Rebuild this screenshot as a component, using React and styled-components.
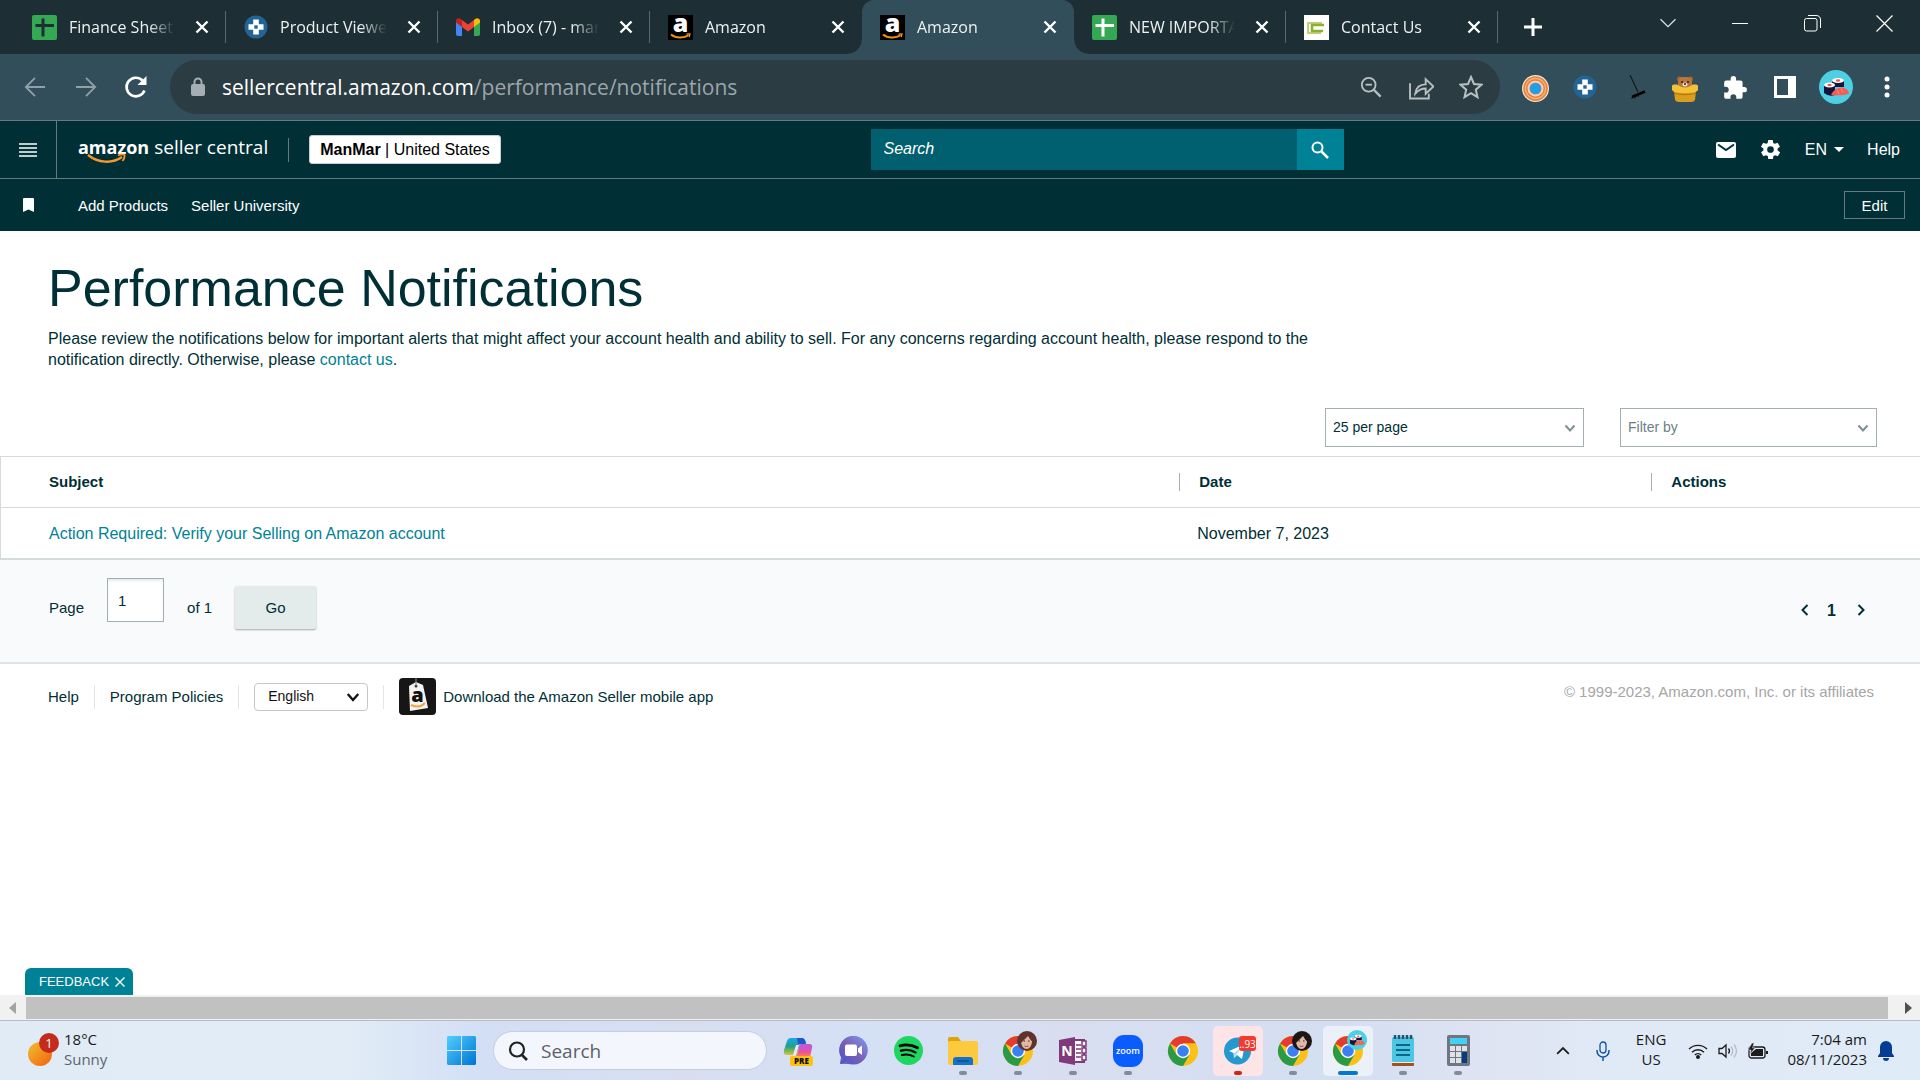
import React from 'react';
import styled, { createGlobalStyle, css } from 'styled-components';

const ui = '"Open Sans", "Noto Sans", sans-serif';
const page = '"Liberation Sans", Arial, sans-serif';

const GlobalStyle = createGlobalStyle`
  * { box-sizing: border-box; }
  body { margin: 0; background: #fff; font-family: ${page}; }
  button, input, select { font: inherit; color: inherit; margin: 0; }
  button { background: none; border: 0; padding: 0; cursor: pointer; }
  a { text-decoration: none; color: inherit; }
  svg { display: block; flex: none; }
`;

const Window = styled.div`
  min-height: 100vh;
  display: flex;
  flex-direction: column;
`;

/* ---------- browser chrome ---------- */

const TabStrip = styled.div`
  display: flex;
  height: 54px;
  padding-left: 14px;
  background: #1d2f35;
  color: #fff;
  font: 16px/24px ${ui};
`;

const Tab = styled.div`
  position: relative;
  flex: 0 1 212px;
  min-width: 0;
  display: flex;
  align-items: center;
  padding: 0 17px 0 18px;
  color: #eef1f2;
  ${p => p.$active && css`
    background: #324e5a;
    border-radius: 12px 12px 0 0;
    &::before, &::after {
      content: "";
      position: absolute;
      bottom: 0;
      width: 14px;
      height: 14px;
    }
    &::before {
      left: -14px;
      background: radial-gradient(circle at 0 0, transparent 13px, #324e5a 14px);
    }
    &::after {
      right: -14px;
      background: radial-gradient(circle at 100% 0, transparent 13px, #324e5a 14px);
    }
  `}
  ${p => p.$divider && css`
    &::after {
      content: "";
      position: absolute;
      right: 0;
      top: 11px;
      width: 1px;
      height: 32px;
      background: #58696f;
    }
  `}
`;

const TabTitle = styled.span`
  flex: 1;
  margin: 0 20px 0 12px;
  overflow: hidden;
  white-space: nowrap;
  mask-image: linear-gradient(90deg, #000 75%, transparent 100%);
`;

const IconButton = styled.button`
  display: grid;
  place-items: center;
  width: ${p => p.$w || 24}px;
  height: ${p => p.$h || 24}px;
`;

const NewTab = styled(IconButton)`
  align-self: center;
  margin-left: 10px;
`;

const WindowControls = styled.div`
  display: flex;
  margin-left: auto;
`;

const Toolbar = styled.div`
  display: flex;
  align-items: center;
  height: 66px;
  padding-left: 9px;
  background: #324e5a;
  color: #fff;
`;

const NavButtons = styled.div`
  display: flex;
  width: 161px;
`;

const Omnibox = styled.div`
  flex: 1;
  display: flex;
  align-items: center;
  height: 54px;
  padding: 0 4px 0 20px;
  border-radius: 27px;
  background: #2b3c43;
  margin-right: 10px;
`;

const Url = styled.div`
  flex: 1;
  margin-left: 16px;
  font: 21px/30px ${ui};
  color: #9ba6ab;
  white-space: nowrap;
  b { font-weight: 400; color: #fff; }
`;

const OmniActions = styled.div`
  display: flex;
  color: #b9c0c3;
`;

const Extensions = styled.div`
  display: flex;
  align-items: center;
  padding-right: 8px;
`;

/* ---------- seller central header ---------- */

const Header = styled.header`
  display: grid;
  grid-template-columns: 151fr 473px 100fr;
  height: 59px;
  background: #002f36;
  border-top: 1px solid #667a80;
  border-bottom: 1px solid #667a80;
  color: #fff;
  font-size: 16px;
`;

const Brand = styled.div`
  display: flex;
  align-items: center;
`;

const MenuButton = styled.button`
  display: grid;
  place-items: center;
  width: 57px;
  height: 57px;
  border-right: 1px solid #667a80;
`;

const Logo = styled.a`
  position: relative;
  display: flex;
  align-items: baseline;
  gap: 5px;
  margin: 0 20px 6px 21px;
  font: 19px/24px ${ui};
  b { font-size: 18px; }
  svg { position: absolute; left: 9px; top: 18px; }
`;

const Account = styled.button`
  height: 29px;
  margin-left: 20px;
  padding: 0 10px;
  border: 1px solid #c8cccc;
  border-radius: 3px;
  background: #fff;
  color: #000;
  white-space: nowrap;
`;

const Rule = styled.span`
  width: 1px;
  height: 24px;
  background: ${p => p.$color};
`;

const SearchForm = styled.form`
  align-self: center;
  display: flex;
  height: 41px;
  input {
    flex: 1;
    min-width: 0;
    padding: 0 13px 2px;
    border: 0;
    border-radius: 0;
    background: #00606f;
    outline: 0;
    font-style: italic;
    &::placeholder { color: #fff; opacity: 1; }
  }
  button {
    display: grid;
    place-items: center;
    width: 47px;
    background: #008296;
  }
`;

const HeaderLinks = styled.div`
  display: flex;
  align-items: center;
  justify-content: flex-end;
  padding-right: 20px;
`;

const Language = styled.button`
  display: flex;
  align-items: center;
  gap: 7px;
  margin: 0 23px 0 12px;
`;

const Favorites = styled.nav`
  display: flex;
  align-items: center;
  gap: 23px;
  height: 52px;
  padding: 0 15px 0 23px;
  background: #002f36;
  color: #fff;
  font-size: 15px;
  svg { margin-right: 21px; }
`;

const EditButton = styled.button`
  width: 61px;
  height: 28px;
  margin-left: auto;
  border: 1px solid #667a80;
`;

/* ---------- page ---------- */

const Main = styled.main`
  flex: 1;
  display: flex;
  flex-direction: column;
  color: #002f36;
  font-size: 16px;
  line-height: 21px;
`;

const Intro = styled.section`
  padding: 27px 48px 0;
  h1 {
    margin: 0;
    font-size: 52px;
    line-height: 60px;
    font-weight: 400;
  }
  p {
    max-width: 1270px;
    margin: 10px 0 0;
  }
`;

const TextLink = styled.a`
  color: #008296;
`;

const Filters = styled.div`
  display: flex;
  justify-content: flex-end;
  gap: 36px;
  padding: 38px 43px 9px;
`;

const SelectBox = styled.span`
  display: grid;
  width: ${p => p.$w}px;
  align-items: center;
  & > * { grid-area: 1 / 1; }
  svg { justify-self: end; margin-right: 8px; pointer-events: none; }
`;

const FilterSelect = styled.select`
  appearance: none;
  width: 100%;
  height: 39px;
  padding: 0 7px;
  border: 1px solid #a2b0b3;
  border-radius: 0;
  background: #fff;
  color: ${p => p.$muted ? '#6c7f84' : '#002f36'};
  font-size: 14px;
`;

const Table = styled.table`
  width: 100%;
  table-layout: fixed;
  border-collapse: separate;
  border-spacing: 0;
  border: 1px solid #d5dbdb;
  border-right: 0;
  th, td {
    height: 50px;
    padding: 0 0 0 18px;
    text-align: left;
  }
  th {
    height: 51px;
    padding: 0;
    border-bottom: 1px solid #d5dbdb;
    font-size: 15px;
  }
  th:first-child, td:first-child { padding-left: 48px; }
  th:first-child div { border: 0; padding: 0; }
`;

const HeadCell = styled.div`
  padding-left: 19px;
  border-left: 1px solid #a2b0b3;
  line-height: 18px;
`;

const Pager = styled.section`
  display: flex;
  justify-content: space-between;
  align-items: flex-start;
  height: 105px;
  padding: 18px 49px 0;
  border-top: 1px solid #d5dbdb;
  border-bottom: 2px solid #dfe3e5;
  background: #f9fafc;
`;

const PageForm = styled.form`
  display: flex;
  align-items: flex-end;
  gap: 23px;
  font-size: 15px;
  line-height: 43px;
  input {
    width: 57px;
    height: 44px;
    margin-bottom: 7px;
    padding: 0 10px;
    border: 1px solid #a2b0b3;
    border-radius: 0;
    background: #fff;
    box-shadow: inset 0 2px 2px #e8ebec;
  }
  button {
    width: 81px;
    height: 43px;
    border-radius: 2px;
    background: #e3ebeb;
    box-shadow: 0 1px 2px #00000055;
  }
`;

const PageNav = styled.nav`
  display: flex;
  align-items: center;
  gap: 18px;
  margin: 20px 3px 0 0;
`;

const Footer = styled.footer`
  display: flex;
  align-items: center;
  padding: 14px 46px 0 48px;
  font-size: 15px;
`;

const FooterLinks = styled.div`
  display: flex;
  align-items: center;
  gap: 15px;
`;

const FooterSelect = styled.select`
  appearance: none;
  width: 100%;
  height: 28px;
  padding: 0 13px;
  border: 1px solid #c4c8c8;
  border-radius: 4px;
  background: #fff;
  color: #111;
  font-size: 14px;
`;

const AppLink = styled.a`
  display: flex;
  align-items: center;
  gap: 7px;
`;

const Copyright = styled.span`
  align-self: flex-start;
  margin-left: auto;
  color: #a6a6a6;
  line-height: 28px;
`;

const Feedback = styled.button`
  align-self: flex-start;
  display: flex;
  align-items: center;
  gap: 6px;
  height: 27px;
  margin: auto 0 0 25px;
  padding: 0 8px 0 14px;
  border-radius: 6px 6px 0 0;
  background: #008296;
  color: #fff;
  font-size: 13px;
`;

const ScrollBar = styled.div`
  display: flex;
  align-items: center;
  justify-content: space-between;
  gap: 10px;
  height: 25px;
  padding: 0 8px 0 9px;
  background: #f1f1f1;
`;

const ScrollThumb = styled.div`
  flex: 1;
  height: 22px;
  margin-right: 7px;
  background: #c1c1c1;
`;

/* ---------- taskbar ---------- */

const Taskbar = styled.footer`
  display: grid;
  grid-template-columns: 1fr auto 1fr;
  height: 60px;
  border-top: 1px solid #b4bac6;
  background: linear-gradient(90deg, #e0ebf6 0%, #e1ecf6 18%, #d3dff5 25%, #d8def0 36%, #d4e0f5 45%, #d8def0 55%, #d4dff2 70%, #dfe4f2 78%, #e0eaf6 84%, #dfebf7 100%);
  color: #1b1b1b;
  font: 15px/20px ${ui};
`;

const Weather = styled.div`
  display: flex;
  align-items: center;
  gap: 5px;
  padding-left: 26px;
  small { display: block; font-size: 15px; color: #5d6470; }
`;

const Apps = styled.div`
  display: flex;
  align-items: center;
  padding-left: 4px;
`;

const AppButton = styled.button`
  position: relative;
  display: grid;
  place-items: center;
  width: 50px;
  height: 50px;
  margin: 0 5px 0 0;
  border-radius: 5px;
  background: ${p => p.$bg || 'none'};
  &::after {
    content: "";
    position: absolute;
    bottom: 1px;
    width: ${p => p.$wide ? 20 : 8}px;
    height: 4px;
    border-radius: 2px;
    background: ${p => p.$dot || 'transparent'};
  }
`;

const TaskSearch = styled.label`
  display: flex;
  align-items: center;
  gap: 13px;
  width: 274px;
  height: 39px;
  margin: 0 6px 0 2px;
  padding: 0 14px;
  border: 1px solid #c5cde2;
  border-radius: 20px;
  background: #f3f6fd;
  input {
    min-width: 0;
    flex: 1;
    padding: 0;
    border: 0;
    outline: 0;
    background: none;
    font-size: 19px;
    &::placeholder { color: #5d6068; opacity: 1; }
  }
`;

const Tray = styled.div`
  display: flex;
  align-items: center;
  justify-content: flex-end;
  padding-right: 26px;
`;

const BarText = styled.div`
  margin: 0 ${p => p.$r || 0}px 0 ${p => p.$l || 0}px;
  padding-bottom: 4px;
  text-align: ${p => p.$align || 'left'};
`;

/* ---------- drawings ---------- */

const Svg = ({ w = 24, h = w, vb = '0 0 24 24', children, ...rest }) => (
  <svg width={w} height={h} viewBox={vb} fill="none" aria-hidden="true" {...rest}>{children}</svg>
);
const line = { stroke: 'currentColor', strokeWidth: 2 };

const Close = () => <Svg w={14} vb="0 0 14 14"><path d="M1.5 1.5l11 11M12.5 1.5l-11 11" stroke="#fff" strokeWidth="2.4" /></Svg>;
const Sheet = ({ cross = '#fff' }) => (
  <Svg w={25} vb="0 0 25 25"><rect width="25" height="25" rx="2" fill="#34a853" /><path d="M11 3.500V21.500M3.500 10.500H22" stroke={cross} strokeWidth="3" /></Svg>
);
const Plus = () => (
  <Svg w={24}><circle cx="12" cy="12" r="11.500" fill="#226595" /><path d="M9.200 4.500h5.600v4.700h4.700v5.600h-4.700v4.700H9.200v-4.700H4.500V9.200h4.700z" fill="#fff" /><rect x="10.300" y="10.300" width="3.400" height="3.400" fill="#226595" /></Svg>
);
const Gmail = () => (
  <Svg w={24}><path d="M0 6v13a2 2 0 002 2h4V10z" fill="#4285f4" /><path d="M24 6v13a2 2 0 01-2 2h-4V10z" fill="#34a853" /><path d="M18 5v7l6-4.500V6c0-2.800-3-3.500-4.500-2.200z" fill="#fbbc04" /><path d="M6 5v7L0 7.500V6c0-2.800 3-3.500 4.500-2.200z" fill="#c5221f" /><path d="M6 12V5l6 4.500L18 5v7l-6 4.500z" fill="#ea4335" /></Svg>
);
const AmazonA = () => (
  <Svg w={25} vb="0 0 25 25"><rect width="25" height="25" fill="#000" /><text x="12.500" y="17" textAnchor="middle" fontFamily="Open Sans, sans-serif" fontWeight="800" fontSize="25" fill="#fff">a</text><path d="M3 19.500c5 4 13 4 17.500.8" stroke="#f29111" strokeWidth="2" /><path d="M18.500 19.200l3.500-.2-.8 3" stroke="#f29111" strokeWidth="1.300" /></Svg>
);
const Contact = () => (
  <Svg w={25} vb="0 0 25 25"><rect width="25" height="25" fill="#fff" /><path d="M18 8H4v10h13" stroke="#bcd07c" strokeWidth="2" /><path d="M20 10H8v6h11" stroke="#8bb02c" strokeWidth="2.500" /></Svg>
);
const Chevron = ({ w = 12, color = '#7d9094', d = 'M1.500 3.500l4.500 5 4.500-5', sw = 2 }) => (
  <Svg w={w} vb="0 0 12 12"><path d={d} stroke={color} strokeWidth={sw} /></Svg>
);
const Puzzle = () => (
  <Svg w={26}><path fill="#fff" d="M20.500 11H19V7a2 2 0 00-2-2h-4V3.500a2.500 2.500 0 00-5 0V5H4a2 2 0 00-2 2v3.800h1.500a2.700 2.700 0 010 5.400H2V20a2 2 0 002 2h3.800v-1.500a2.700 2.700 0 015.400 0V22H17a2 2 0 002-2v-4h1.500a2.500 2.500 0 000-5z" /></Svg>
);
const Bear = () => (
  <Svg w={28} vb="0 0 28 28"><circle cx="8.500" cy="4" r="2.500" fill="#a5652d" /><circle cx="19.500" cy="4" r="2.500" fill="#a5652d" /><rect x="7" y="2" width="14" height="13" rx="5" fill="#b9763a" /><circle cx="11" cy="7" r="1" fill="#222" /><circle cx="17" cy="7" r="1" fill="#222" /><ellipse cx="14" cy="9.500" rx="2.500" ry="2" fill="#f5e4cf" /><circle cx="14" cy="9" r="1" fill="#222" /><path d="M3 16h22l-1 9q-1 2-4 2H8q-3 0-4-2z" fill="#dc9c1c" /><path d="M1 11q0-1.500 2-1.500h3q8 6 16 0h3q2 0 2 1.500v4q-1 3-13 3T1 15z" fill="#f4c236" /><path d="M3 18.500q11 2.500 22 0" stroke="#a87410" /></Svg>
);
const Target = () => (
  <Svg w={27}><circle cx="12" cy="12" r="12" fill="#f4e5d8" /><circle cx="12" cy="12" r="9" stroke="#e8853d" strokeWidth="4" /><circle cx="12" cy="12" r="9" stroke="#f0b48a" strokeWidth="1" /><circle cx="12" cy="12" r="6.500" fill="#f8c9a0" /><circle cx="12" cy="12" r="5.200" fill="#3a92e0" /><circle cx="12" cy="12" r="3" fill="#11a6ea" /></Svg>
);
const Rake = () => (
  <Svg w={24}><path d="M7 0l8 17" stroke="#15191b" strokeWidth="1.200" /><path d="M9 22l13-5.500" stroke="#000" strokeWidth="2.500" /><path d="M9 22.500v1.500M12 22v1.500M15 20.500V22" stroke="#111" /></Svg>
);
const SushiArt = () => (
  <g>
    <circle cx="17" cy="17" r="17" fill="#4dd0e1" />
    <path d="M13 10v7h12v-7z" fill="#14143c" /><ellipse cx="19" cy="10.500" rx="6" ry="2.500" fill="#fff" /><ellipse cx="19" cy="10.500" rx="2.200" ry="1.200" fill="#f4584e" />
    <path d="M5 15v8q5 4 11 2V15z" fill="#14143c" /><ellipse cx="10.500" cy="15" rx="5.500" ry="2.500" fill="#fff" /><ellipse cx="10.500" cy="15" rx="2.200" ry="1.200" fill="#f4584e" />
    <path d="M12 24.500q4-7 11-7 6 1 7 6-5 2.500-10 1.500-5 1-8-.5z" fill="#fb5a53" /><path d="M18 20l2 4M22 18.500l2 4" stroke="#ff8d84" />
  </g>
);
const ChromeLogo = ({ avatar }) => (
  <Svg w={38} h={42} vb="0 0 38 42">
    <g transform="translate(4 6)">
      <circle cx="15" cy="15" r="15" fill="#fbc116" />
      <path d="M15 15L2 7.500A15 15 0 0128 7.500H15z" fill="#e33b2e" />
      <path d="M15 15l-6.500 3.700L2 7.500A15 15 0 0015 30l6.500-11.300z" fill="#2a9a46" />
      <path d="M21.500 18.700L28 7.500H15v7.500z" fill="#fbc116" />
      <circle cx="15" cy="15" r="7.200" fill="#fff" /><circle cx="15" cy="15" r="5.800" fill="#3c7ff0" />
    </g>
    {avatar === 'sushi' && <g transform="translate(18 0) scale(.59)"><SushiArt /></g>}
    {avatar && avatar !== 'sushi' && (
      <g>
        <circle cx="28" cy="11" r="10" fill={avatar} />
        <ellipse cx="27.500" cy="11.500" rx="5.500" ry="7.500" fill="#e3b7a4" />
        <path d="M21 14Q21 3 28 3q6 0 6 9-3-2-5-6-3 3-8 8z" fill={avatar} />
        <path d="M25.500 16q2 1 4 0" stroke="#a54450" /><path d="M24.500 11h1.500M29 11h1.500" stroke="#3b2420" />
      </g>
    )}
  </Svg>
);
const Start = () => (
  <Svg w={29} vb="0 0 29 29"><defs><linearGradient id="win" x1="0" y1="0" x2="1" y2="1"><stop stopColor="#4fd0ff" /><stop offset="1" stopColor="#0072d2" /></linearGradient></defs><path fill="url(#win)" d="M1 0h13v14H0V1zM15 0h13l1 1v13H15zM0 15h14v14H1l-1-1zM15 15h14v13l-1 1H15z" /></Svg>
);
const Copilot = () => (
  <Svg w={30} vb="0 0 30 30"><defs><linearGradient id="ca" x1="0" y1="0" x2="0" y2="1"><stop stopColor="#19a7ea" /><stop offset=".5" stopColor="#23a08a" /><stop offset="1" stopColor="#d8c52e" /></linearGradient><linearGradient id="cb" x1="0" y1="0" x2="0" y2="1"><stop stopColor="#b35bea" /><stop offset=".6" stopColor="#ee4f9d" /><stop offset="1" stopColor="#f98355" /></linearGradient></defs>
    <path d="M8 2h11q3 0 4 5h-6l-3 12H4q-4 0-3-5L4 5q1-3 4-3z" fill="url(#ca)" /><path d="M14 2h5q3 0 4 6h-8z" fill="#1f55cf" /><path d="M18 8h8q4 0 3 4l-2 9H11q3-1 4-5l1-5q0-3 2-3z" fill="url(#cb)" /><path d="M16 9l-3 10h-3l3-10z" fill="#e6eafa" />
    <rect x="7" y="20" width="23" height="10" rx="2" fill="#ffc30b" /><text x="18.500" y="28.300" textAnchor="middle" fontFamily="Open Sans, sans-serif" fontWeight="800" fontSize="8" fill="#111">PRE</text></Svg>
);
const Meet = () => (
  <Svg w={29} vb="0 0 29 29"><defs><linearGradient id="mt" x1="1" y1="0" x2="0" y2="1"><stop stopColor="#7f9cf2" /><stop offset=".5" stopColor="#7a62b8" /><stop offset="1" stopColor="#4d50c8" /></linearGradient></defs><path d="M14.500 0A14.300 14.300 0 112 21.500L1 28l8-.500A14.300 14.300 0 0114.500 0z" fill="url(#mt)" /><circle cx="14.500" cy="14" r="14" fill="url(#mt)" /><rect x="6" y="8.500" width="12" height="11.500" rx="2" fill="#fff" /><path d="M19 12.500l4-3v9.500l-4-3z" fill="#fff" /></Svg>
);
const Spotify = () => (
  <Svg w={29} vb="0 0 29 29"><circle cx="14.500" cy="14.500" r="14.500" fill="#1ed760" /><g stroke="#000" strokeLinecap="round"><path d="M6 9.800q9-2.500 17.500 2" strokeWidth="2.800" /><path d="M7 14.600q8-2 14.500 1.800" strokeWidth="2.300" /><path d="M7.800 19q6.500-1.500 12 1.500" strokeWidth="1.900" /></g></Svg>
);
const Folder = () => (
  <Svg w={30} vb="0 0 30 30"><path d="M0 3q0-2 2-2h8l3 4h15v8H0z" fill="#e0a20c" /><rect y="5" width="30" height="24" rx="2" fill="#fdca3f" /><path d="M5 29v-5q0-3 3-3h14q3 0 3 3v5z" fill="#1273c9" /><path d="M9 25h12" stroke="#0a4f97" strokeWidth="1.500" /></Svg>
);
const OneNote = () => (
  <Svg w={28} h={30} vb="0 0 28 30"><path d="M15 4h10v22H15z" fill="#fff" stroke="#80397b" strokeWidth="2" /><path d="M23 5h4v5h-4zM23 12h4v5h-4zM23 19h4v5h-4z" fill="#fff" stroke="#80397b" strokeWidth="1.500" /><path d="M17 9h5M17 13h5M17 17h5M17 21h5" stroke="#80397b" strokeWidth="1.500" /><path d="M0 4l16-3v28L0 26z" fill="#80397b" /><text x="8" y="20" textAnchor="middle" fontFamily="Open Sans, sans-serif" fontWeight="700" fontSize="14" fill="#fff">N</text></Svg>
);
const Zoom = () => (
  <Svg w={30} h={32} vb="0 0 30 32"><rect width="30" height="32" rx="11" fill="#0b5cff" /><text x="15" y="18.500" textAnchor="middle" fontFamily="Open Sans, sans-serif" fontWeight="600" fontSize="9" fill="#fff">zoom</text></Svg>
);
const Telegram = () => (
  <Svg w={36} h={30} vb="0 0 36 30"><g transform="translate(3 0)"><circle cx="14.500" cy="15" r="13.500" fill="#2399cf" /><path d="M6 15l16-7-3 15-5-4-3 3-.500-5z" fill="#fff" /><path d="M11 17l8-6-5.500 7.500-2.500 3z" fill="#b8d9ec" /></g><rect x="19" y="0" width="17" height="15" rx="3" fill="#f4392f" /><text x="27.500" y="11.500" textAnchor="middle" fontFamily="Open Sans, sans-serif" fontSize="10" fill="#fff">..93</text></Svg>
);
const Notepad = () => (
  <Svg w={24} h={32} vb="0 0 24 32"><rect x="1" y="26" width="22" height="5" rx="1" fill="#a3501b" /><path d="M1 26h22v2H1z" fill="#e8eef0" /><rect x="1" y="2" width="22" height="25" rx="1.500" fill="#4cc6e3" /><path d="M5 10h14M5 15h14M5 20h14" stroke="#0b6687" strokeWidth="2" /><path d="M4 0v4M8 0v4M12 0v4M16 0v4M20 0v4" stroke="#1e5570" strokeWidth="2.500" /></Svg>
);
const Calc = () => (
  <Svg w={23} h={31} vb="0 0 23 31"><rect width="23" height="31" rx="2" fill="#6d7681" /><rect x="3" y="3" width="17" height="6" fill="#43d0f6" /><path fill="#dfe3e8" d="M3 11h5v5H3zM9 11h5v5H9zM15 11h5v5h-5zM3 17h5v5H3zM9 17h5v5H9zM3 23h5v5H3zM9 23h5v5H9z" /><path fill="#0a3b7c" d="M15 17h5v11h-5z" /></Svg>
);

const tabs = [
  { title: 'Finance Sheet', icon: <Sheet cross="#1d2f35" />, divider: true },
  { title: 'Product Viewer', icon: <Plus />, divider: true },
  { title: 'Inbox (7) - manmar', icon: <Gmail />, divider: true },
  { title: 'Amazon', icon: <AmazonA /> },
  { title: 'Amazon', icon: <AmazonA />, active: true },
  { title: 'NEW IMPORTANT', icon: <Sheet />, divider: true },
  { title: 'Contact Us', icon: <Contact />, divider: true },
];

const grey = '#868b98';
const apps = [
  { name: 'Copilot', icon: <Copilot /> },
  { name: 'Meet', icon: <Meet /> },
  { name: 'Spotify', icon: <Spotify /> },
  { name: 'Files', icon: <Folder />, dot: grey },
  { name: 'Chrome profile 1', icon: <ChromeLogo avatar="#5e342c" />, dot: grey },
  { name: 'OneNote', icon: <OneNote />, dot: grey },
  { name: 'Zoom', icon: <Zoom />, dot: grey },
  { name: 'Chrome', icon: <ChromeLogo /> },
  { name: 'Telegram', icon: <Telegram />, dot: '#c42b1c', bg: '#fde4e6' },
  { name: 'Chrome profile 2', icon: <ChromeLogo avatar="#1c1616" />, dot: grey },
  { name: 'Chrome profile 3', icon: <ChromeLogo avatar="sushi" />, dot: '#0078d4', bg: '#ebf0f9', wide: true },
  { name: 'Notepad', icon: <Notepad />, dot: grey },
  { name: 'Calculator', icon: <Calc />, dot: grey },
];

const Browser = () => (
  <>
    <TabStrip>
      {tabs.map((t, i) => (
        <Tab key={i} $active={t.active} $divider={t.divider}>
          {t.icon}
          <TabTitle>{t.title}</TabTitle>
          <IconButton $w={14} aria-label="Close tab"><Close /></IconButton>
        </Tab>
      ))}
      <NewTab $w={50} aria-label="New tab"><Svg w={20} vb="0 0 20 20"><path d="M10 1v18M1 10h18" stroke="#fff" strokeWidth="3" /></Svg></NewTab>
      <WindowControls>
        <IconButton $w={72} $h={46} aria-label="Search tabs"><Chevron w={18} color="#dfe4e6" sw={0.8} d="M1 3.500l5 5 5-5" /></IconButton>
        <IconButton $w={72} $h={46} aria-label="Minimize"><Svg w={16} vb="0 0 16 16"><path d="M0 8.500h16" stroke="#fff" /></Svg></IconButton>
        <IconButton $w={72} $h={46} aria-label="Restore"><Svg w={17} vb="0 0 17 17"><rect x=".5" y="3.500" width="12.500" height="12.500" rx="2" stroke="#fff" /><path d="M4 .500h8q4.500 0 4.500 4.500v8" stroke="#fff" /></Svg></IconButton>
        <IconButton $w={72} $h={46} aria-label="Close window"><Svg w={17} vb="0 0 17 17"><path d="M.5.500l16 16M16.500.500l-16 16" stroke="#fff" strokeWidth="1.200" /></Svg></IconButton>
      </WindowControls>
    </TabStrip>
    <Toolbar>
      <NavButtons>
        <IconButton $w={51} aria-label="Back"><Svg w={22} color="#8fa0a7"><path d="M23 12H2M12 2L2 12l10 10" {...line} /></Svg></IconButton>
        <IconButton $w={51} aria-label="Forward"><Svg w={22} color="#8fa0a7"><path d="M1 12h21M12 2l10 10-10 10" {...line} /></Svg></IconButton>
        <IconButton $w={50} aria-label="Reload"><Svg w={24}><path d="M20.500 15.500A9.300 9.300 0 1118.500 5.500" stroke="#fff" strokeWidth="2.600" /><path d="M22.500 1v9h-9z" fill="#fff" /></Svg></IconButton>
      </NavButtons>
      <Omnibox>
        <Svg w={16} h={20} vb="0 0 16 20"><rect x="1" y="7" width="14" height="12" rx="2" fill="#a5adb5" /><path d="M4.500 8V5a3.500 3.500 0 017 0v3" stroke="#a5adb5" strokeWidth="2" /></Svg>
        <Url><b>sellercentral.amazon.com</b>/performance/notifications</Url>
        <OmniActions>
          <IconButton $w={50} aria-label="Zoom"><Svg w={22}><circle cx="9.500" cy="9.500" r="7.500" {...line} /><path d="M15 15l7.500 7.500" {...line} strokeWidth="2.600" /><path d="M6 9.500h7" {...line} /></Svg></IconButton>
          <IconButton $w={50} aria-label="Share"><Svg w={25}><path d="M1 8v14.500h18V18" {...line} strokeWidth="1.800" /><path d="M6 18q1-9 10-9V4l7.500 7-7.500 7v-5q-6 0-10 5z" {...line} strokeWidth="1.800" /></Svg></IconButton>
          <IconButton $w={50} aria-label="Bookmark"><Svg w={24}><path d="M12 2l3 7 7.500.7-5.700 5 1.700 7.500-6.500-4-6.500 4 1.700-7.500-5.700-5L9 9z" {...line} /></Svg></IconButton>
        </OmniActions>
      </Omnibox>
      <Extensions>
        <IconButton $w={50} aria-label="Target extension"><Target /></IconButton>
        <IconButton $w={50} aria-label="Product viewer"><Plus /></IconButton>
        <IconButton $w={50} aria-label="Rake"><Rake /></IconButton>
        <IconButton $w={50} aria-label="Bear"><Bear /></IconButton>
        <IconButton $w={50} aria-label="Extensions"><Puzzle /></IconButton>
        <IconButton $w={50} aria-label="Side panel"><Svg w={22} vb="0 0 22 22"><path fillRule="evenodd" fill="#fff" d="M0 0h22v22H0zM3 3v16h11V3z" /></Svg></IconButton>
        <IconButton $w={51} $h={36} aria-label="Profile"><Svg w={34} vb="0 0 34 34"><SushiArt /></Svg></IconButton>
        <IconButton $w={51} aria-label="Menu"><Svg w={6} h={22} vb="0 0 6 22"><circle cx="3" cy="3" r="2.500" fill="#fff" /><circle cx="3" cy="11" r="2.500" fill="#fff" /><circle cx="3" cy="19" r="2.500" fill="#fff" /></Svg></IconButton>
      </Extensions>
    </Toolbar>
  </>
);

const SellerHeader = () => (
  <>
    <Header>
      <Brand>
        <MenuButton aria-label="Menu"><Svg w={18} h={14} vb="0 0 18 14"><path d="M0 1h18M0 5h18M0 9h18M0 13h18" stroke="#fff" strokeWidth="1.500" /></Svg></MenuButton>
        <Logo href="#home"><b>amazon</b>seller central<Svg w={42} h={12} vb="0 0 42 12"><path d="M1 2c10 8 24 9 34 2" stroke="#f7982d" strokeWidth="2.400" /><path d="M31 2.500q4-2 6.500-.5.500 3-2 6" stroke="#f7982d" strokeWidth="1.800" /></Svg></Logo>
        <Rule $color="#667a80" />
        <Account><b>ManMar</b> | United States</Account>
      </Brand>
      <SearchForm>
        <input aria-label="Search" placeholder="Search" />
        <button type="button" aria-label="Submit search"><Svg w={18} vb="0 0 18 18"><circle cx="6.500" cy="6.500" r="5" stroke="#fff" strokeWidth="2" /><path d="M10.500 10.500l6.500 6.500" stroke="#fff" strokeWidth="2.500" /></Svg></button>
      </SearchForm>
      <HeaderLinks>
        <IconButton $w={44} aria-label="Messages"><Svg w={20} h={16} vb="0 0 20 16"><rect width="20" height="16" rx="2" fill="#fff" /><path d="M2 2.500l8 5.500 8-5.500" stroke="#002f36" strokeWidth="2" /></Svg></IconButton>
        <IconButton $w={45} aria-label="Settings"><Svg w={23}><path fill="#fff" fillRule="evenodd" d="M19.400 13a7.500 7.500 0 000-2l2.100-1.600a.5.500 0 00.1-.7l-2-3.400a.5.500 0 00-.6-.2l-2.500 1a7.300 7.300 0 00-1.700-1L14.500 2.400a.5.500 0 00-.5-.4h-4a.5.500 0 00-.5.400l-.4 2.700c-.6.200-1.200.6-1.700 1l-2.500-1a.5.500 0 00-.6.200l-2 3.400a.5.500 0 00.1.700L4.600 11a7.500 7.500 0 000 2l-2.100 1.600a.5.500 0 00-.1.700l2 3.400c.1.200.4.300.6.200l2.500-1c.5.400 1.100.700 1.700 1l.4 2.700c0 .2.200.4.500.4h4c.300 0 .5-.2.500-.4l.4-2.700c.6-.3 1.200-.6 1.700-1l2.500 1c.2.100.5 0 .6-.2l2-3.400a.5.500 0 00-.1-.7zM12 15.500a3.500 3.500 0 110-7 3.500 3.500 0 010 7z" /></Svg></IconButton>
        <Language>EN <Svg w={10} h={5} vb="0 0 10 5"><path d="M0 0h10L5 5z" fill="#fff" /></Svg></Language>
        <a href="#help">Help</a>
      </HeaderLinks>
    </Header>
    <Favorites>
      <Svg w={11} h={14} vb="0 0 11 14"><path d="M0 1q0-1 1-1h9q1 0 1 1v13l-5.500-2.500L0 14z" fill="#fff" /></Svg>
      <a href="#add">Add Products</a>
      <a href="#university">Seller University</a>
      <EditButton>Edit</EditButton>
    </Favorites>
  </>
);

export default function App() {
  return (
    <Window>
      <GlobalStyle />
      <Browser />
      <SellerHeader />
      <Main>
        <Intro>
          <h1>Performance Notifications</h1>
          <p>
            Please review the notifications below for important alerts that might affect your account health and ability to sell. For any concerns regarding account health, please respond to the notification directly. Otherwise, please <TextLink href="#contact">contact us</TextLink>.
          </p>
        </Intro>
        <Filters>
          <SelectBox $w={259}>
            <FilterSelect aria-label="Rows per page"><option>25 per page</option></FilterSelect>
            <Chevron />
          </SelectBox>
          <SelectBox $w={257}>
            <FilterSelect $muted aria-label="Filter by"><option>Filter by</option></FilterSelect>
            <Chevron />
          </SelectBox>
        </Filters>
        <Table>
          <colgroup><col width="61.4%" /><col width="24.6%" /><col /></colgroup>
          <thead>
            <tr>{['Subject', 'Date', 'Actions'].map(h => <th key={h} scope="col"><HeadCell>{h}</HeadCell></th>)}</tr>
          </thead>
          <tbody>
            <tr>
              <td><TextLink href="#notice">Action Required: Verify your Selling on Amazon account</TextLink></td>
              <td>November 7, 2023</td>
              <td />
            </tr>
          </tbody>
        </Table>
        <Pager>
          <PageForm>
            <label htmlFor="page">Page</label>
            <input id="page" defaultValue="1" />
            <span>of 1</span>
            <button type="button">Go</button>
          </PageForm>
          <PageNav>
            <IconButton $w={10} aria-label="Previous"><Chevron color="#002f36" d="M8.500 1L3.500 6l5 5" /></IconButton>
            <b>1</b>
            <IconButton $w={14} aria-label="Next"><Chevron color="#002f36" d="M3.500 1l5 5-5 5" /></IconButton>
          </PageNav>
        </Pager>
        <Footer>
          <FooterLinks>
            <a href="#help">Help</a>
            <Rule $color="#e3e6e6" />
            <a href="#policies">Program Policies</a>
            <Rule $color="#e3e6e6" />
            <SelectBox $w={114}>
              <FooterSelect aria-label="Language"><option>English</option></FooterSelect>
              <Chevron w={14} color="#111" />
            </SelectBox>
            <Rule $color="#e3e6e6" />
            <AppLink href="#app">
              <Svg w={37} vb="0 0 37 37"><rect width="37" height="37" rx="4" fill="#161616" /><path d="M10 8l7-4 7 3 5 23-18 3z" fill="#f4f4f4" /><circle cx="17" cy="8" r="1.500" fill="#333" /><path d="M17 8V0" stroke="#888" /><text x="18.500" y="24" textAnchor="middle" fontFamily="Open Sans, sans-serif" fontWeight="800" fontSize="20" fill="#111">a</text><path d="M12 27q8 4 14-2" stroke="#f5a340" strokeWidth="2" /></Svg>
              Download the Amazon Seller mobile app
            </AppLink>
          </FooterLinks>
          <Copyright>© 1999-2023, Amazon.com, Inc. or its affiliates</Copyright>
        </Footer>
        <Feedback>FEEDBACK <Svg w={10} vb="0 0 10 10"><path d="M.5.500l9 9M9.500.500l-9 9" stroke="#e5f3f5" strokeWidth="1.500" /></Svg></Feedback>
      </Main>
      <ScrollBar>
        <Svg w={7} h={12} vb="0 0 7 12"><path d="M7 0v12L0 6z" fill="#a3a3a3" /></Svg>
        <ScrollThumb />
        <Svg w={7} h={12} vb="0 0 7 12"><path d="M0 0v12l7-6z" fill="#505050" /></Svg>
      </ScrollBar>
      <Taskbar>
        <Weather>
          <Svg w={33} h={36} vb="0 0 33 36"><defs><linearGradient id="sun" x1="0" y1="0" x2="1" y2="1"><stop stopColor="#f0c030" /><stop offset="1" stopColor="#f2600c" /></linearGradient></defs><circle cx="14" cy="21" r="12" fill="url(#sun)" /><circle cx="23" cy="10" r="10" fill="#c42b1c" /><text x="23" y="14.500" textAnchor="middle" fontFamily="Open Sans, sans-serif" fontSize="13" fill="#fff">1</text></Svg>
          <BarText>18°C<small>Sunny</small></BarText>
        </Weather>
        <Apps>
          <AppButton aria-label="Start"><Start /></AppButton>
          <TaskSearch>
            <Svg w={20} vb="0 0 20 20"><circle cx="9" cy="8.500" r="7" stroke="#222" strokeWidth="2.200" /><path d="M14 14l5 5" stroke="#222" strokeWidth="2.600" /></Svg>
            <input aria-label="Search the computer" placeholder="Search" />
          </TaskSearch>
          {apps.map(a => <AppButton key={a.name} aria-label={a.name} $dot={a.dot} $bg={a.bg} $wide={a.wide}>{a.icon}</AppButton>)}
        </Apps>
        <Tray>
          <IconButton $w={40} aria-label="Hidden icons"><Chevron w={14} color="#1b1b1b" sw={1.5} d="M1 8.500l5-5 5 5" /></IconButton>
          <IconButton $w={40} aria-label="Microphone"><Svg w={14} h={20} vb="0 0 14 20"><rect x="4" y="1" width="6" height="11" rx="3" stroke="#0f52ad" strokeWidth="1.300" /><path d="M1 9v1a6 6 0 0012 0V9M7 16v4" stroke="#0f52ad" strokeWidth="1.500" /></Svg></IconButton>
          <BarText $l={13} $r={22} $align="center">ENG<br />US</BarText>
          <IconButton $w={20} aria-label="Network"><Svg w={20} h={16} vb="0 0 20 16"><path d="M1 6a13 13 0 0118 0M4 9.200a8.500 8.500 0 0112 0M6.800 12a4.500 4.500 0 016.400 0" stroke="#1b1b1b" strokeWidth="1.400" /><circle cx="10" cy="14" r="2" fill="#1b1b1b" /></Svg></IconButton>
          <IconButton $w={40} aria-label="Volume"><Svg w={20} h={16} vb="0 0 20 16"><path d="M1 5.500h3L8 2v12l-4-3.500H1z" stroke="#1b1b1b" strokeWidth="1.300" /><path d="M10.500 5.500q2 2.500 0 5" stroke="#1b1b1b" strokeWidth="1.300" /><path d="M13 3.500q3.500 4.500 0 9M16 1.500q5 6.500 0 13" stroke="#b5bbc5" strokeWidth="1.300" /></Svg></IconButton>
          <IconButton $w={20} aria-label="Battery"><Svg w={20} h={16} vb="0 0 20 16"><rect x="1" y="4" width="16" height="11" rx="2.500" stroke="#1b1b1b" strokeWidth="1.300" /><path d="M8 6h7v7H3v-3zM18 8h2v3h-2z" fill="#1b1b1b" /><path d="M4 0L0 7h3l-1 4 5-6H4.500L6 0z" fill="#1b1b1b" stroke="#e0eaf6" strokeWidth=".5" /></Svg></IconButton>
          <BarText $l={19} $r={11} $align="right">7:04 am<br />08/11/2023</BarText>
          <IconButton $w={16} aria-label="Notifications"><Svg w={16} h={20} vb="0 0 16 20"><path d="M8 0a6 6 0 016 6v6l2 3v1H0v-1l2-3V6a6 6 0 016-6zM5 17h6a3 3 0 01-6 0z" fill="#053d93" /></Svg></IconButton>
        </Tray>
      </Taskbar>
    </Window>
  );
}
